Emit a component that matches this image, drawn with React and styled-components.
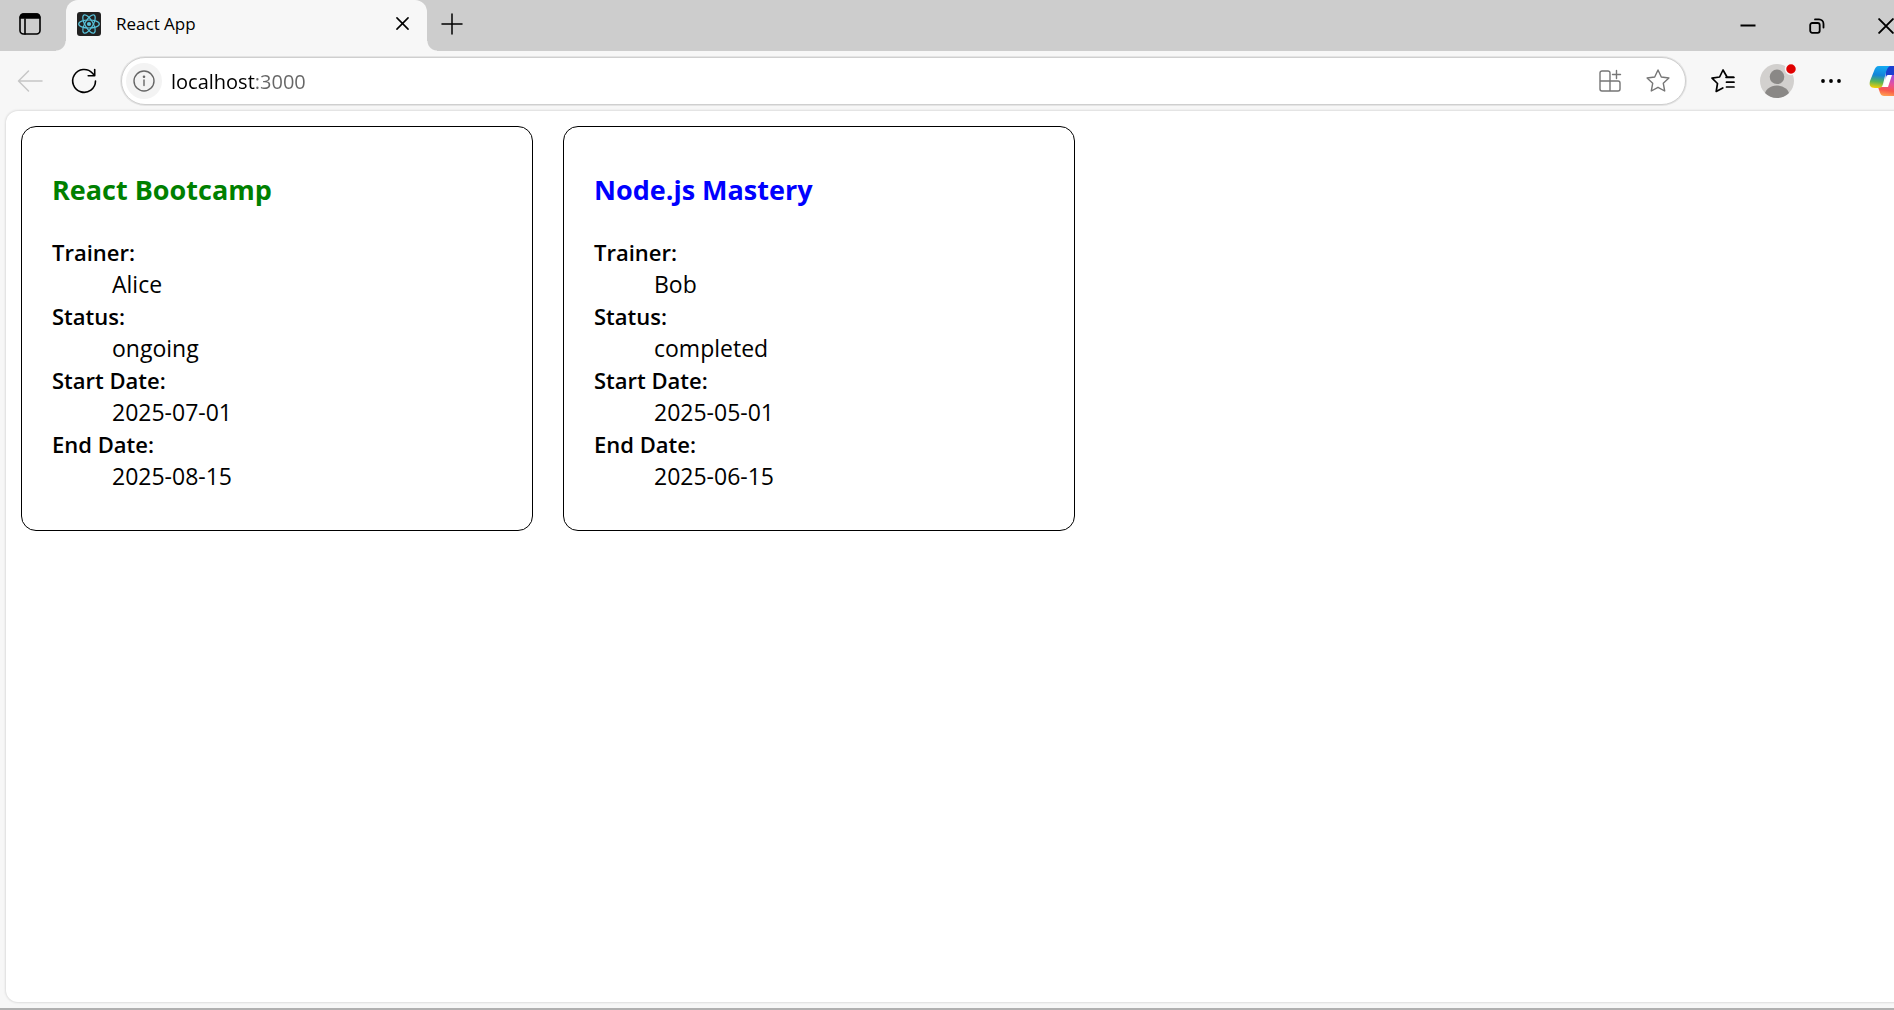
import React from "react";
import styled, { createGlobalStyle } from "styled-components";

const UI_FONT = '"Open Sans", "Noto Sans", sans-serif';

const GlobalStyle = createGlobalStyle`
  *, *::before, *::after { box-sizing: border-box; }
  html { height: 100%; }
  body {
    margin: 0;
    height: 100%;
    overflow: hidden;
    background: #f7f7f7;
    color: #000;
    font-family: ${UI_FONT};
  }
  #root { height: 100%; }
`;

/* The maximised window runs a little past the right edge of the viewport. */
const Window = styled.div`
  display: flex;
  flex-direction: column;
  width: calc(100% + 26px);
  height: 100%;
  background: #f7f7f7;
  border-bottom: 2px solid #b0b0b0;
`;

const TabStrip = styled.header`
  display: flex;
  align-items: stretch;
  height: 51px;
  background: #cdcdcd;
`;

const IconButton = styled.button`
  display: flex;
  align-items: center;
  justify-content: center;
  flex: none;
  width: ${(p) => p.$width}px;
  padding: 0;
  border: 0;
  background: transparent;
  color: ${(p) => p.$color || "#000"};
  svg { display: block; overflow: visible; }
`;

const TabActionsSlot = styled.div`
  display: flex;
  padding-bottom: 3px;
`;

const Tab = styled.div`
  position: relative;
  display: flex;
  align-items: center;
  width: 361px;
  margin-left: 6px;
  padding: 0 7px 4px 11px;
  border-radius: 12px 12px 0 0;
  background: #f7f7f7;
  &::before, &::after {
    content: "";
    position: absolute;
    bottom: 0;
    width: 10px;
    height: 10px;
  }
  &::before {
    right: 100%;
    background: radial-gradient(circle at 0 0, transparent 9px, #f7f7f7 10px);
  }
  &::after {
    left: 100%;
    background: radial-gradient(circle at 100% 0, transparent 9px, #f7f7f7 10px);
  }
`;

const TabTitle = styled.span`
  flex: 1;
  margin-left: 15px;
  font-size: 17px;
  line-height: 24px;
`;

const NewTabSlot = styled.div`
  display: flex;
  flex: 1;
  padding: 0 0 4px 9px;
`;

const Toolbar = styled.nav`
  display: flex;
  align-items: center;
  height: 60px;
  padding: 0 2px 0 3px;
`;

const AddressBar = styled.form`
  display: flex;
  align-items: center;
  flex: 1;
  height: 48px;
  margin: 0 12px 0 10px;
  padding: 0 3px 0 4px;
  border: 1px solid #cfcfcf;
  box-shadow: 0 0 0 1px #e4e4e4;
  border-radius: 24px;
  background: #fff;
`;

const SiteInfo = styled(IconButton)`
  height: 36px;
  border-radius: 50%;
  background: #f3f3f3;
`;

const AddressInput = styled.input`
  flex: 1;
  min-width: 0;
  height: 40px;
  margin-left: 9px;
  padding: 0;
  border: 0;
  outline: 0;
  background: linear-gradient(90deg, #000 84px, #666 84px);
  background-clip: text;
  -webkit-background-clip: text;
  -webkit-text-fill-color: transparent;
  font: 20px ${UI_FONT};
`;

const Viewport = styled.main`
  display: flex;
  flex-wrap: wrap;
  align-content: flex-start;
  align-items: flex-start;
  gap: 30px;
  flex: 1;
  margin: 0 0 6px 6px;
  padding: 15px;
  border-radius: 12px 0 0 12px;
  box-shadow: 0 0 2px 1px #dedede;
  background: #fff;
`;

const Card = styled.article`
  width: 512px;
  padding: 30px;
  border: 1px solid #000;
  border-radius: 15px;
`;

const CardTitle = styled.h3`
  margin: 14px 0 27px;
  color: ${(p) => p.$color};
  font-size: 27px;
  font-weight: 700;
  line-height: 38px;
`;

const Details = styled.dl`
  margin: 0 0 8px;
  font-size: 23px;
  line-height: 32px;
`;

const Term = styled.dt`
  font-size: 22px;
  font-weight: 600;
`;

const Value = styled.dd`
  margin: 0 0 0 60px;
`;

const stroke = { fill: "none", stroke: "currentColor", strokeLinecap: "round", strokeLinejoin: "round" };

const TabActionsIcon = () => (
  <svg width="22" height="22" viewBox="0 0 22 22" {...stroke} strokeWidth="1.6">
    <rect x="1" y="1" width="20" height="20" rx="3.5" />
    <path d="M1.500 5V4a3 3 0 0 1 3-3h13a3 3 0 0 1 3 3v1z" fill="currentColor" />
    <path d="M6 6v15" />
  </svg>
);

const ReactIcon = () => (
  <svg width="24" height="24" viewBox="0 0 24 24" fill="none" stroke="#58c4dc" strokeWidth="1.2">
    <rect width="24" height="24" rx="3" fill="#222" stroke="none" />
    <circle cx="12" cy="12" r="2.1" fill="#58c4dc" stroke="none" />
    <ellipse cx="12" cy="12" rx="10.3" ry="4" />
    <ellipse cx="12" cy="12" rx="10.3" ry="4" transform="rotate(60 12 12)" />
    <ellipse cx="12" cy="12" rx="10.3" ry="4" transform="rotate(120 12 12)" />
  </svg>
);

const CrossIcon = ({ size }) => (
  <svg width={size} height={size} viewBox="0 0 14 14" {...stroke} strokeWidth="1.7">
    <path d="M1 1l12 12M13 1L1 13" />
  </svg>
);

const PlusIcon = () => (
  <svg width="22" height="22" viewBox="0 0 22 22" {...stroke} strokeWidth="1.5">
    <path d="M11 1v20M1 11h20" />
  </svg>
);

const MinimizeIcon = () => (
  <svg width="16" height="16" viewBox="0 0 16 16" {...stroke} strokeLinecap="butt" strokeWidth="2">
    <path d="M0.500 7.500h15" />
  </svg>
);

const RestoreIcon = () => (
  <svg width="16" height="16" viewBox="0 0 16 16" {...stroke} strokeWidth="1.8">
    <rect x="1.200" y="5" width="9.500" height="9.800" rx="2" />
    <path d="M6 1.400h4a4.500 4.500 0 0 1 4.500 4.500v3.600" />
  </svg>
);

const BackIcon = () => (
  <svg width="26" height="22" viewBox="0 0 26 22" {...stroke} strokeWidth="1.5">
    <path d="M25 11H1.500M11.500 1L1.500 11l10 10" />
  </svg>
);

const ReloadIcon = () => (
  <svg width="26" height="26" viewBox="0 0 26 26" {...stroke} strokeWidth="1.6">
    <path d="M24.500 13A11.400 11.400 0 1 1 21.500 5.200l2.200 2.500M23.700 1.500v6.200h-6.500" />
  </svg>
);

const InfoIcon = () => (
  <svg width="22" height="22" viewBox="0 0 22 22" {...stroke} strokeWidth="1.4">
    <circle cx="11" cy="11" r="10" />
    <path d="M11 10v5.500" />
    <circle cx="11" cy="6.800" r="0.600" fill="currentColor" />
  </svg>
);

const AppsIcon = () => (
  <svg width="22" height="22" viewBox="0 0 22 22" {...stroke} strokeWidth="1.4">
    <path d="M11 11V3a2 2 0 0 0-2-2H3a2 2 0 0 0-2 2v16a2 2 0 0 0 2 2h16a2 2 0 0 0 2-2v-6a2 2 0 0 0-2-2H1M11 11v10M17.500 0.500v8M13.500 4.500h8" />
  </svg>
);

const StarIcon = () => (
  <svg width="24" height="24" viewBox="0 0 24 24" {...stroke} strokeWidth="1.4">
    <path d="M12 1l3.300 7 7.600 1-5.600 5.300 1.400 7.700L12 18.300 5.300 22l1.400-7.700L1.100 9l7.600-1z" />
  </svg>
);

const FavoritesIcon = () => (
  <svg width="24" height="24" viewBox="0 0 24 24" {...stroke} strokeWidth="1.700">
    <path d="M22.500 8.200h-6.300L12 1 8.600 8 1 9.200l5.500 5.300L5.200 22.500l6.600-3.600M15 8.300h8M15.500 13.200H23M15.500 18H23" />
  </svg>
);

const ProfileIcon = () => (
  <svg width="34" height="34" viewBox="0 0 34 34">
    <clipPath id="avatar"><circle cx="17" cy="17" r="17" /></clipPath>
    <circle cx="17" cy="17" r="17" fill="#d2d0ce" />
    <g fill="#8a8886" clipPath="url(#avatar)">
      <circle cx="17" cy="12.800" r="7.300" />
      <ellipse cx="17" cy="32" rx="12.500" ry="10.500" />
    </g>
    <circle cx="31" cy="5" r="5.500" fill="#e00000" stroke="#f7f7f7" strokeWidth="1.500" />
  </svg>
);

const MoreIcon = () => (
  <svg width="20" height="4" viewBox="0 0 20 4" fill="currentColor">
    <circle cx="2" cy="2" r="1.900" />
    <circle cx="10" cy="2" r="1.900" />
    <circle cx="18" cy="2" r="1.900" />
  </svg>
);

const CopilotIcon = () => (
  <svg width="34" height="30" viewBox="0 0 34 30">
    <defs>
      <linearGradient id="ribbonLeft" x1="0.300" y1="0" x2="0.200" y2="1">
        <stop offset="0" stopColor="#14a8f0" />
        <stop offset="0.400" stopColor="#1484d8" />
        <stop offset="0.700" stopColor="#58b458" />
        <stop offset="1" stopColor="#ffd000" />
      </linearGradient>
      <linearGradient id="ribbonRight" x1="0.600" y1="0" x2="0.400" y2="1">
        <stop offset="0" stopColor="#9a50e8" />
        <stop offset="0.450" stopColor="#e8509a" />
        <stop offset="0.750" stopColor="#f8584c" />
        <stop offset="1" stopColor="#ff9a50" />
      </linearGradient>
    </defs>
    <path d="M15 0h8c3 0 4 2 5 5l1 4h-9l-4 6z" fill="#1a3fd0" />
    <path d="M8 21h6c2 0 3-1 4-4l3-8h7c5 0 6 3 5 7l-3 9c-1 3-3 5-6 5H14c-3 0-4-3-5-6z" fill="url(#ribbonRight)" />
    <path d="M9 0h11c-2 1-3 3-4 6l-3 12c-1 3-2 4-5 4H5c-5 0-6-3-5-7L4 5c1-3 2-5 5-5z" fill="url(#ribbonLeft)" />
    <path d="M18 9h4l-4 12h-5c1-1 2-6 3-9 0-2 1-3 2-3z" fill="#fff" />
  </svg>
);

const trainings = [
  { name: "React Bootcamp", color: "green", trainer: "Alice", status: "ongoing", start: "2025-07-01", end: "2025-08-15" },
  { name: "Node.js Mastery", color: "blue", trainer: "Bob", status: "completed", start: "2025-05-01", end: "2025-06-15" },
];

function TrainingCard({ training }) {
  return (
    <Card>
      <CardTitle $color={training.color}>{training.name}</CardTitle>
      <Details>
        <Term>Trainer:</Term>
        <Value>{training.trainer}</Value>
        <Term>Status:</Term>
        <Value>{training.status}</Value>
        <Term>Start Date:</Term>
        <Value>{training.start}</Value>
        <Term>End Date:</Term>
        <Value>{training.end}</Value>
      </Details>
    </Card>
  );
}

export default function App() {
  return (
    <>
      <GlobalStyle />
      <Window>
        <TabStrip>
          <TabActionsSlot>
            <IconButton $width={60} aria-label="Tab actions"><TabActionsIcon /></IconButton>
          </TabActionsSlot>
          <Tab>
            <ReactIcon />
            <TabTitle>React App</TabTitle>
            <IconButton $width={36} aria-label="Close tab"><CrossIcon size={13} /></IconButton>
          </Tab>
          <NewTabSlot>
            <IconButton $width={32} aria-label="New tab"><PlusIcon /></IconButton>
          </NewTabSlot>
          <IconButton $width={69} aria-label="Minimize"><MinimizeIcon /></IconButton>
          <IconButton $width={69} aria-label="Restore"><RestoreIcon /></IconButton>
          <IconButton $width={69} aria-label="Close window"><CrossIcon size={16} /></IconButton>
        </TabStrip>
        <Toolbar>
          <IconButton $width={54} $color="#c6c6c6" aria-label="Back"><BackIcon /></IconButton>
          <IconButton $width={54} aria-label="Reload"><ReloadIcon /></IconButton>
          <AddressBar onSubmit={(e) => e.preventDefault()}>
            <SiteInfo type="button" $width={36} $color="#666" aria-label="Site information"><InfoIcon /></SiteInfo>
            <AddressInput aria-label="Address" defaultValue="localhost:3000" />
            <IconButton type="button" $width={48} $color="#767676" aria-label="Apps"><AppsIcon /></IconButton>
            <IconButton type="button" $width={48} $color="#767676" aria-label="Add to favorites"><StarIcon /></IconButton>
          </AddressBar>
          <IconButton $width={50} aria-label="Favorites"><FavoritesIcon /></IconButton>
          <IconButton $width={58} aria-label="Profile"><ProfileIcon /></IconButton>
          <IconButton $width={50} aria-label="Settings and more"><MoreIcon /></IconButton>
          <IconButton $width={62} aria-label="Copilot"><CopilotIcon /></IconButton>
        </Toolbar>
        <Viewport>
          {trainings.map((t) => <TrainingCard key={t.name} training={t} />)}
        </Viewport>
      </Window>
    </>
  );
}
